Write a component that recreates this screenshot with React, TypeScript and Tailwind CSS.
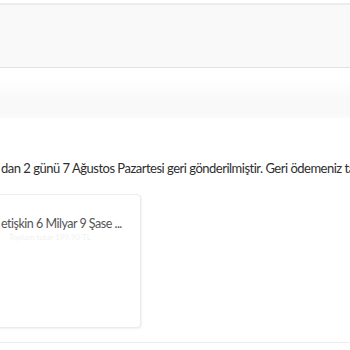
export default function App() {
  return (
    <div className="w-[350px] h-[350px] overflow-hidden bg-white relative" style={{ fontFamily: 'Lato, "Open Sans", sans-serif' }}>
      <div className="h-[3px] bg-white" />
      <div className="h-[65px] bg-[#f9f9f9] border-t-2 border-t-[#ececec] border-b border-b-[#e2e2e2]" />
      <div className="h-[11px] bg-white" />
      <div className="h-[36px] bg-gradient-to-b from-white via-[#f9f9f9] to-[#f9f9f9]" />
      <div className="h-[3px] bg-[#fbfbfb]" />
      <div className="h-[40px]" />
      <div className="whitespace-nowrap text-[13px] tracking-[-0.5px] leading-[20px] text-[#2e2e2e] pl-[1px]">
        dan 2 günü 7 Ağustos Pazartesi geri gönderilmiştir. Geri ödemeniz ta
      </div>
      <div className="h-[16px]" />
      <div className="-ml-[20px] w-[161px] h-[134px] rounded-[4px] border border-[#ececec] bg-white shadow-[1px_1px_2px_rgba(0,0,0,0.06)] pt-[20px] pl-[20px]">
        <div className="whitespace-nowrap text-[12.5px] tracking-[-0.5px] leading-[18px] text-[#555555]">etişkin 6 Milyar 9 Şase ...</div>
        <div className="whitespace-nowrap text-[8px] leading-[8px] text-[#f2f2ee] pl-[8px]">Toplam tutar 199,90 TL</div>
      </div>
      <div className="h-[14px]" />
      <div className="h-[1px] bg-[#ececec]" />
    </div>
  );
}
